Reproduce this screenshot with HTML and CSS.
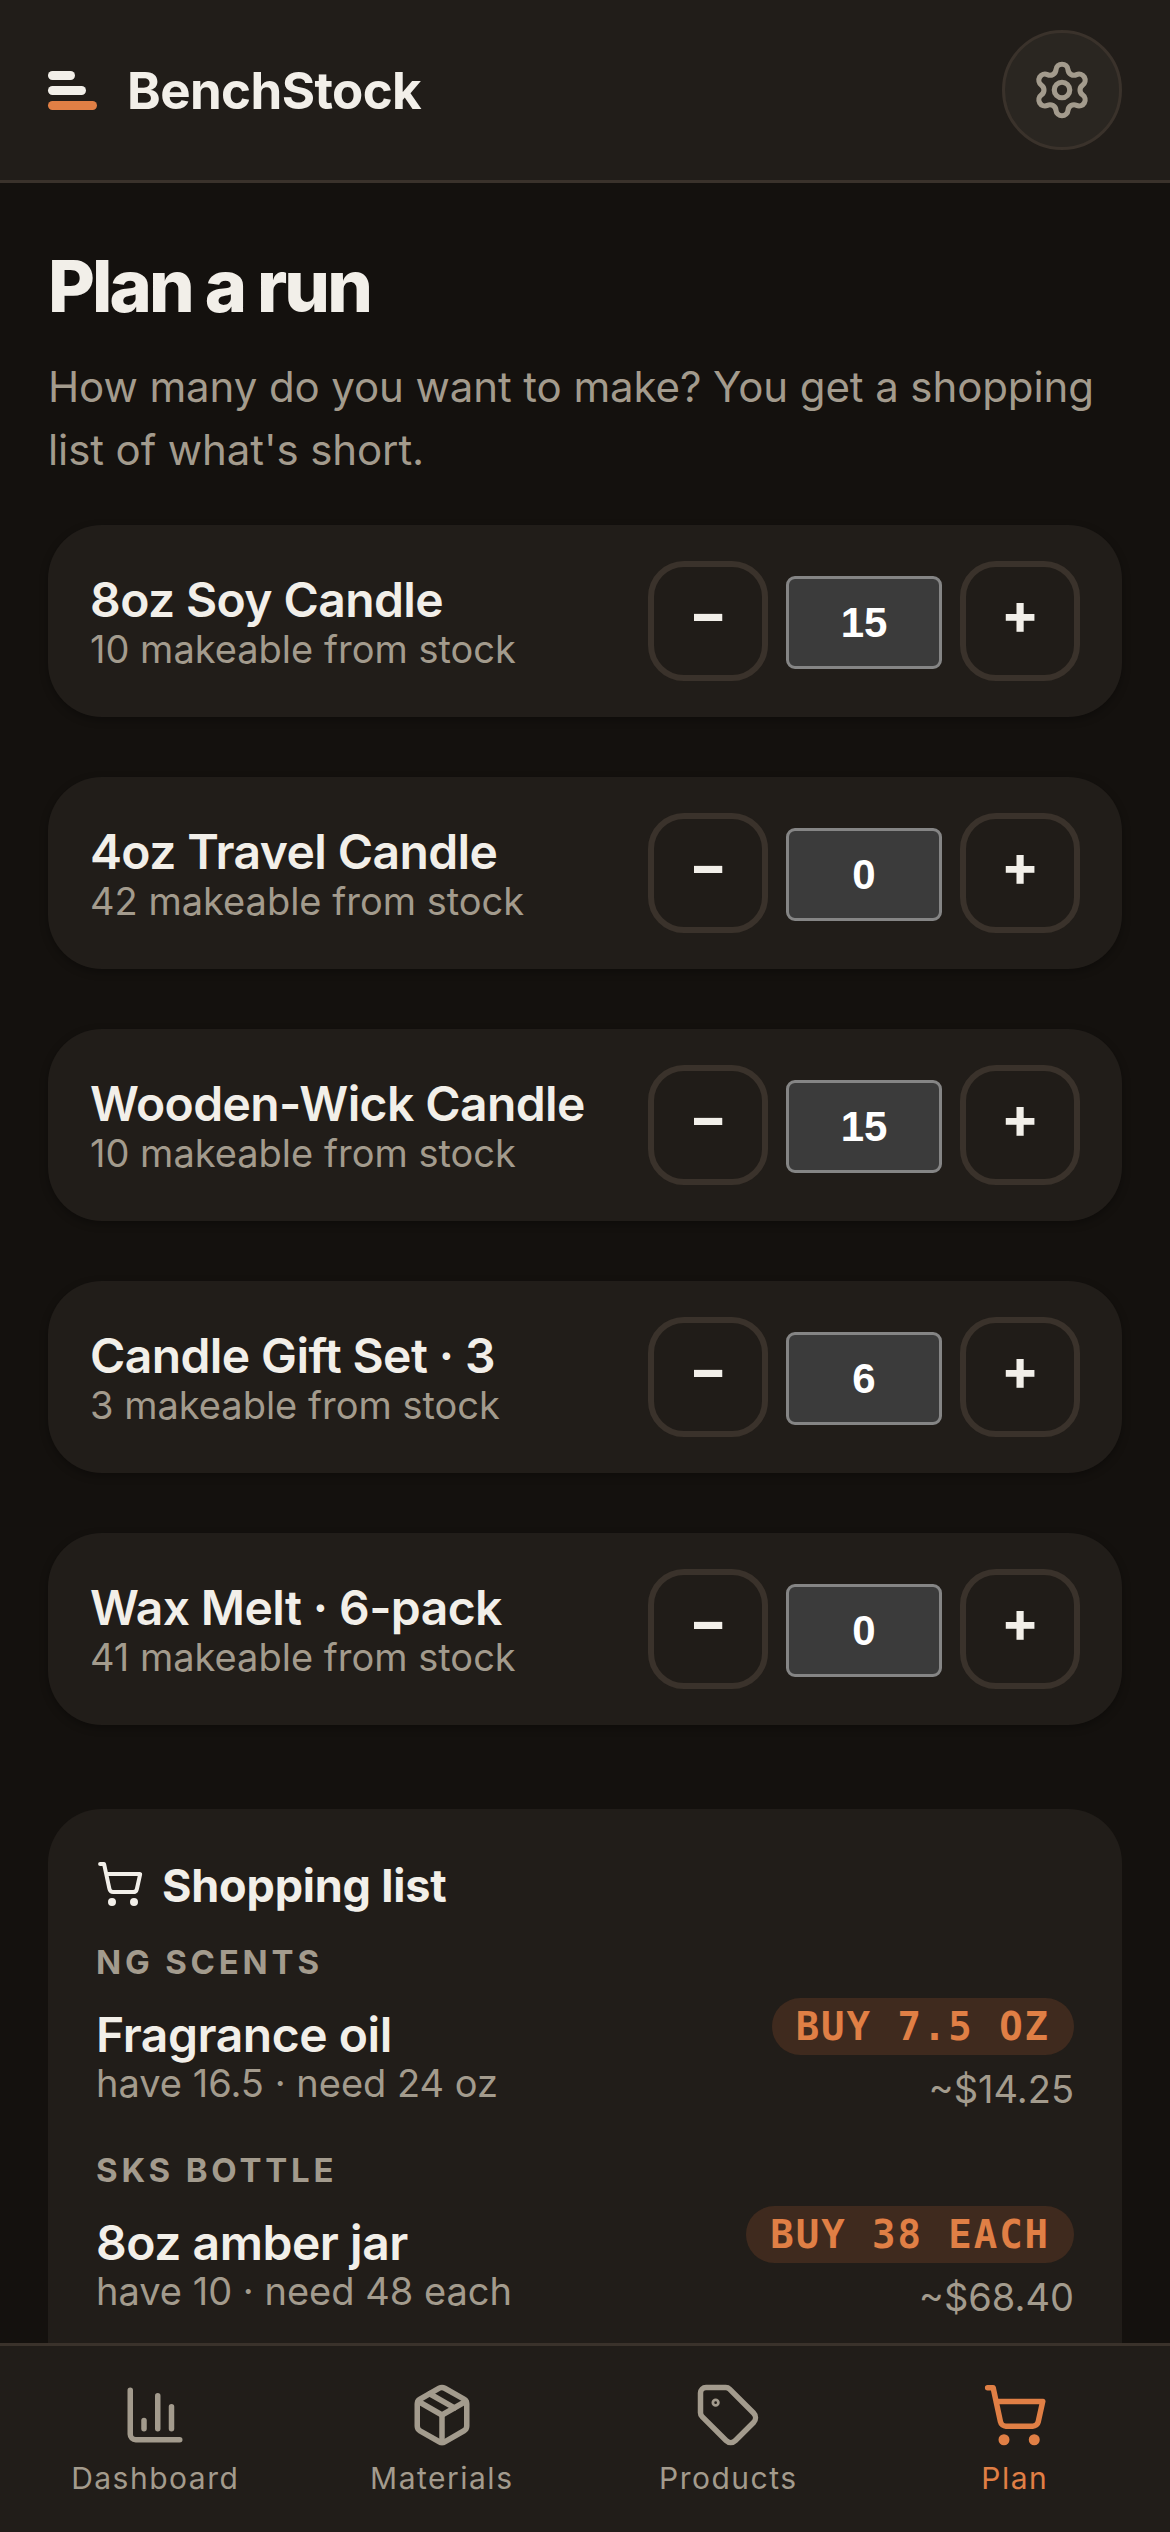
FILE: index.html
```html
<!DOCTYPE html>
<html lang="en">
<head>
    <meta charset="UTF-8">
    <meta name="viewport" content="width=device-width, initial-scale=1.0">
    <title>BenchStock</title>
    <link rel="stylesheet" href="styles.css">
</head>
<body>
    <header class="topbar">
        <div class="brand">
            <div class="logo">
                <span class="logo-bar logo-bar-s"></span>
                <span class="logo-bar logo-bar-m"></span>
                <span class="logo-bar logo-bar-l"></span>
            </div>
            <span class="brand-name">BenchStock</span>
        </div>
        <button class="settings">
            <svg class="icon-gear" viewBox="0 0 24 24"><path d="M9.671 4.136a2.34 2.34 0 0 1 4.659 0 2.34 2.34 0 0 0 3.319 1.915 2.34 2.34 0 0 1 2.33 4.033 2.34 2.34 0 0 0 0 3.831 2.34 2.34 0 0 1-2.33 4.033 2.34 2.34 0 0 0-3.319 1.915 2.34 2.34 0 0 1-4.659 0 2.34 2.34 0 0 0-3.32-1.915 2.34 2.34 0 0 1-2.33-4.033 2.34 2.34 0 0 0 0-3.831A2.34 2.34 0 0 1 6.35 6.051a2.34 2.34 0 0 0 3.319-1.915"/><circle cx="12" cy="12" r="3"/></svg>
        </button>
    </header>

    <main class="content">
        <h1>Plan a run</h1>
        <p class="intro">How many do you want to make? You get a shopping list of what's short.</p>

        <div class="products">
            <div class="product">
                <div class="product-info">
                    <div class="product-name">8oz Soy Candle</div>
                    <div class="product-sub">10 makeable from stock</div>
                </div>
                <div class="stepper">
                    <button class="step">−</button>
                    <input class="qty" value="15">
                    <button class="step">+</button>
                </div>
            </div>
            <div class="product">
                <div class="product-info">
                    <div class="product-name">4oz Travel Candle</div>
                    <div class="product-sub">42 makeable from stock</div>
                </div>
                <div class="stepper">
                    <button class="step">−</button>
                    <input class="qty" value="0">
                    <button class="step">+</button>
                </div>
            </div>
            <div class="product">
                <div class="product-info">
                    <div class="product-name">Wooden-Wick Candle</div>
                    <div class="product-sub">10 makeable from stock</div>
                </div>
                <div class="stepper">
                    <button class="step">−</button>
                    <input class="qty" value="15">
                    <button class="step">+</button>
                </div>
            </div>
            <div class="product">
                <div class="product-info">
                    <div class="product-name">Candle Gift Set · 3</div>
                    <div class="product-sub">3 makeable from stock</div>
                </div>
                <div class="stepper">
                    <button class="step">−</button>
                    <input class="qty" value="6">
                    <button class="step">+</button>
                </div>
            </div>
            <div class="product">
                <div class="product-info">
                    <div class="product-name">Wax Melt · 6-pack</div>
                    <div class="product-sub">41 makeable from stock</div>
                </div>
                <div class="stepper">
                    <button class="step">−</button>
                    <input class="qty" value="0">
                    <button class="step">+</button>
                </div>
            </div>
        </div>

        <section class="shopping">
            <h2>
                <svg class="icon-cart" viewBox="0 0 24 24"><circle cx="8" cy="21" r="1"/><circle cx="19" cy="21" r="1"/><path d="M2.05 2.05h2l2.66 12.42a2 2 0 0 0 2 1.58h9.78a2 2 0 0 0 1.95-1.57l1.65-7.43H5.12"/></svg>
                Shopping list
            </h2>

            <div class="supplier">NG SCENTS</div>
            <div class="buy-row">
                <div>
                    <div class="buy-name">Fragrance oil</div>
                    <div class="buy-sub">have 16.5 · need 24 oz</div>
                </div>
                <div class="buy-side">
                    <span class="badge">BUY 7.5 OZ</span>
                    <span class="cost">~$14.25</span>
                </div>
            </div>

            <div class="supplier">SKS BOTTLE</div>
            <div class="buy-row">
                <div>
                    <div class="buy-name">8oz amber jar</div>
                    <div class="buy-sub">have 10 · need 48 each</div>
                </div>
                <div class="buy-side">
                    <span class="badge">BUY 38 EACH</span>
                    <span class="cost">~$68.40</span>
                </div>
            </div>
        </section>
    </main>

    <nav class="tabs">
        <a class="tab">
            <svg viewBox="0 0 24 24"><path d="M3 3v16a2 2 0 0 0 2 2h16"/><path d="M18 17V9"/><path d="M13 17V5"/><path d="M8 17v-3"/></svg>
            <span>Dashboard</span>
        </a>
        <a class="tab">
            <svg viewBox="0 0 24 24"><path d="M11 21.73a2 2 0 0 0 2 0l7-4A2 2 0 0 0 21 16V8a2 2 0 0 0-1-1.73l-7-4a2 2 0 0 0-2 0l-7 4A2 2 0 0 0 3 8v8a2 2 0 0 0 1 1.73z"/><path d="M12 22V12"/><path d="M3.29 7 12 12l8.71-5"/><path d="m7.5 4.27 9 5.15"/></svg>
            <span>Materials</span>
        </a>
        <a class="tab">
            <svg viewBox="0 0 24 24"><path d="M12.586 2.586A2 2 0 0 0 11.172 2H4a2 2 0 0 0-2 2v7.172a2 2 0 0 0 .586 1.414l8.704 8.704a2.426 2.426 0 0 0 3.42 0l6.58-6.58a2.426 2.426 0 0 0 0-3.42z"/><circle cx="7.5" cy="7.5" r=".5"/></svg>
            <span>Products</span>
        </a>
        <a class="tab tab-active">
            <svg viewBox="0 0 24 24"><circle cx="8" cy="21" r="1"/><circle cx="19" cy="21" r="1"/><path d="M2.05 2.05h2l2.66 12.42a2 2 0 0 0 2 1.58h9.78a2 2 0 0 0 1.95-1.57l1.65-7.43H5.12"/></svg>
            <span>Plan</span>
        </a>
    </nav>
</body>
</html>
```

FILE: styles.css
```css
* {
    box-sizing: border-box;
}
html, body {
    height: 100%;
}
body {
    margin: 0;
    display: flex;
    flex-direction: column;
    overflow: hidden;
    font-family: Inter, "Noto Sans", sans-serif;
    background-color: #14110e;
    color: #f2efe9;
}
svg {
    fill: none;
    stroke: currentColor;
    stroke-width: 2;
    stroke-linecap: round;
    stroke-linejoin: round;
}

.topbar {
    flex: none;
    height: 183px;
    padding: 0 48px;
    display: flex;
    align-items: center;
    justify-content: space-between;
    background-color: #211d19;
    border-bottom: 3px solid #3a322b;
}
.brand {
    display: flex;
    align-items: center;
    gap: 30px;
}
.logo {
    display: flex;
    flex-direction: column;
    gap: 6px;
}
.logo-bar {
    display: block;
    height: 9px;
    border-radius: 5px;
    background-color: #f2efe9;
}
.logo-bar-s { width: 27px; }
.logo-bar-m { width: 38px; }
.logo-bar-l { width: 49px; background-color: #e07f45; }
.brand-name {
    font-size: 51px;
    font-weight: 700;
    letter-spacing: -0.6px;
}
.settings {
    width: 120px;
    height: 120px;
    padding: 0;
    display: flex;
    align-items: center;
    justify-content: center;
    border: 3px solid #3a322b;
    border-radius: 50%;
    background-color: #2a2621;
    color: #a39b8d;
}
.icon-gear {
    width: 62px;
    height: 62px;
}

.content {
    flex: 1;
    min-height: 0;
    overflow: hidden;
    padding: 58px 48px 0;
}
h1 {
    margin: 0;
    font-size: 72px;
    line-height: 90px;
    font-weight: 800;
    letter-spacing: -2.9px;
}
.intro {
    margin: 24px 0 0;
    font-size: 42px;
    line-height: 63px;
    letter-spacing: -0.1px;
    color: #a39b8d;
}

.products {
    margin-top: 44px;
    display: flex;
    flex-direction: column;
    gap: 60px;
}
.product {
    height: 192px;
    padding: 36px 42px;
    display: flex;
    align-items: center;
    justify-content: space-between;
    background-color: #211d19;
    border-radius: 54px;
    box-shadow: 0 3px 9px rgba(0, 0, 0, 0.3);
}
.product-name {
    font-size: 48px;
    line-height: 54px;
    font-weight: 600;
    letter-spacing: -0.6px;
}
.product-sub {
    margin-top: 1px;
    font-size: 38px;
    line-height: 42px;
    color: #a39b8d;
}
.stepper {
    display: flex;
    align-items: center;
    gap: 18px;
}
.step {
    width: 120px;
    height: 120px;
    padding: 0 0 15px;
    font-family: Inter, sans-serif;
    font-size: 57px;
    font-weight: 700;
    color: #f2efe9;
    background-color: #201c18;
    border: 6px solid #3a322b;
    border-radius: 36px;
}
.qty {
    width: 156px;
    height: 93px;
    margin-top: 3px;
    padding: 0;
    text-align: center;
    font-family: "Liberation Sans", Arial, sans-serif;
    font-size: 42px;
    font-weight: 700;
    color: #fff;
    background-color: #3b3b3b;
    border: 3px solid #858585;
    border-radius: 9px;
}

.shopping {
    margin-top: 84px;
    min-height: 700px;
    padding: 50px 48px 48px;
    background-color: #211d19;
    border-radius: 54px;
}
.shopping h2 {
    margin: 0;
    display: flex;
    align-items: center;
    gap: 18px;
    font-size: 45px;
    line-height: 54px;
    font-weight: 700;
    letter-spacing: -0.2px;
}
.icon-cart {
    width: 48px;
    height: 48px;
    margin-top: -4px;
}
.supplier {
    margin-top: 28px;
    font-size: 33px;
    line-height: 42px;
    font-weight: 700;
    letter-spacing: 3.8px;
    color: #a39b8d;
}
.buy-row {
    margin-top: 15px;
    padding-bottom: 8px;
    display: flex;
    align-items: flex-start;
    justify-content: space-between;
}
.buy-name {
    margin-top: 10px;
    font-size: 48px;
    line-height: 54px;
    font-weight: 600;
    letter-spacing: -0.45px;
}
.buy-sub {
    font-size: 38px;
    line-height: 42px;
    color: #a39b8d;
}
.buy-side {
    display: flex;
    flex-direction: column;
    align-items: flex-end;
    gap: 10px;
}
.badge {
    height: 57px;
    padding: 0 24px;
    display: flex;
    align-items: center;
    white-space: pre;
    font-family: "DejaVu Sans Mono", monospace;
    font-size: 39px;
    font-weight: 700;
    letter-spacing: 1.95px;
    color: #e07f45;
    background-color: #3f2a1e;
    border-radius: 30px;
}
.cost {
    font-size: 38px;
    line-height: 48px;
    color: #a39b8d;
}

.tabs {
    flex: none;
    height: 189px;
    padding: 36px 12px 0;
    display: flex;
    background-color: #211d19;
    border-top: 3px solid #3a322b;
}
.tab {
    flex: 1;
    display: flex;
    flex-direction: column;
    align-items: center;
    gap: 12px;
    color: #a39b8d;
    font-size: 30px;
    line-height: 36px;
    font-weight: 400;
    letter-spacing: 1.5px;
}
.tab svg {
    width: 66px;
    height: 66px;
}
.tab-active {
    color: #e07f45;
}
```
